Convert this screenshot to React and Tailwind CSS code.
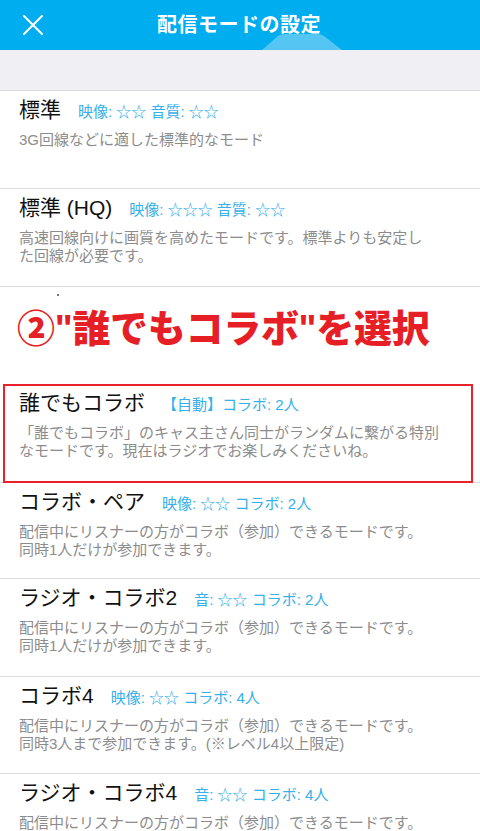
const FONT = "font-['Liberation_Sans','Noto_Sans_CJK_JP',sans-serif]"

const modes = [
  {
    title: '標準',
    info: '映像: ☆☆ 音質: ☆☆',
    desc: ['3G回線などに適した標準的なモード'],
    h: 'h-[98px]',
  },
  {
    title: '標準 (HQ)',
    info: '映像: ☆☆☆ 音質: ☆☆',
    desc: ['高速回線向けに画質を高めたモードです。標準よりも安定し', 'た回線が必要です。'],
    h: 'h-[98px]',
  },
]

const collabs = [
  {
    title: 'コラボ・ペア',
    info: '映像: ☆☆ コラボ: 2人',
    desc: ['配信中にリスナーの方がコラボ（参加）できるモードです。', '同時1人だけが参加できます。'],
    h: 'h-[96px]',
  },
  {
    title: 'ラジオ・コラボ2',
    info: '音: ☆☆ コラボ: 2人',
    desc: ['配信中にリスナーの方がコラボ（参加）できるモードです。', '同時1人だけが参加できます。'],
    h: 'h-[98px]',
  },
  {
    title: 'コラボ4',
    info: '映像: ☆☆ コラボ: 4人',
    desc: ['配信中にリスナーの方がコラボ（参加）できるモードです。', '同時3人まで参加できます。(※レベル4以上限定)'],
    h: 'h-[97px]',
  },
  {
    title: 'ラジオ・コラボ4',
    info: '音: ☆☆ コラボ: 4人',
    desc: ['配信中にリスナーの方がコラボ（参加）できるモードです。', '同時3人まで参加できます。(※レベル4以上限定)'],
    h: 'h-[98px]',
  },
]

function ModeRow({ mode, className = '' }) {
  return (
    <div className={`relative ${mode.h} border-b border-[#dcdcdc] pl-[19px] pt-[7px] ${className}`}>
      <div className="flex items-baseline">
        <span className="text-[21px] leading-[24px] text-[#111]">{mode.title}</span>
        <span className="ml-[17px] text-[15px] leading-[24px] text-[#35b0ea]">{mode.info}</span>
      </div>
      <div className="mt-[7px] text-[15px] leading-[18px] text-[#8c8c8c]">
        {mode.desc.map((line, i) => (
          <div key={i}>{line}</div>
        ))}
      </div>
    </div>
  )
}

export default function App() {
  return (
    <div className={`h-[831px] w-[480px] overflow-hidden bg-white ${FONT}`}>
      <header className="relative flex h-[50px] items-center justify-center bg-[#00adee]">
        <svg className="absolute left-[23px] top-[15px]" width="20" height="20" viewBox="0 0 20 20" aria-hidden="true">
          <path d="M1 1 L19 19 M19 1 L1 19" stroke="#fff" strokeWidth="2" strokeLinecap="round" />
        </svg>
        <svg className="absolute bottom-0 left-[262px]" width="80" height="17" viewBox="0 0 80 17" aria-hidden="true">
          <path d="M0 17 L16 3 Q19 1 23 1 L55 1 Q59 1 62 3 L80 17 Z" fill="#55c6f3" />
        </svg>
        <h1 className="relative mr-[2px] text-[20px] font-bold tracking-[0.5px] text-white">配信モードの設定</h1>
      </header>

      <div className="h-[41px] border-b border-[#d8d8dd] bg-[#efeff4]" />

      {modes.map((m) => (
        <ModeRow key={m.title} mode={m} />
      ))}

      <div className="relative h-[97px] pl-[17px] pt-[23px]">
        <span className="absolute left-[57px] top-[7px] h-[2px] w-[2px] bg-[#777]" />
        <p className="text-[38px] font-black leading-none tracking-[-0.3px] text-[#e61f27]">
          ②"誰でもコラボ"を選択
        </p>
      </div>

      <div className="relative">
        <ModeRow
          mode={{
            title: '誰でもコラボ',
            info: '【自動】コラボ: 2人',
            desc: ['「誰でもコラボ」のキャス主さん同士がランダムに繋がる特別', 'なモードです。現在はラジオでお楽しみくださいね。'],
            h: 'h-[99px]',
          }}
          className="pt-[6px]"
        />
        <div className="pointer-events-none absolute bottom-0 left-[3px] right-[7px] top-0 border-2 border-[#e8212b]" />
      </div>

      {collabs.map((m) => (
        <ModeRow key={m.title} mode={m} />
      ))}
    </div>
  )
}
